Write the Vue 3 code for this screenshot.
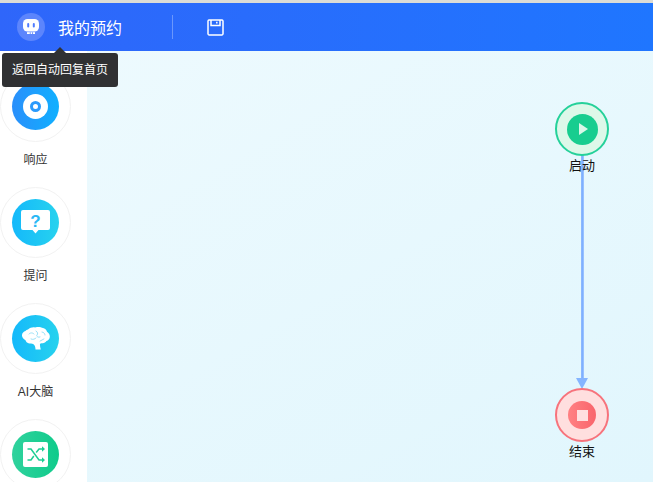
<script setup>
const items = [
  { label: '响应', cls: 'blue', icon: 'disc' },
  { label: '提问', cls: 'cyan', icon: 'ask' },
  { label: 'AI大脑', cls: 'cyan', icon: 'brain' },
  { label: '', cls: 'green', icon: 'shuffle' },
]
</script>

<template>
  <div class="page">
    <header class="header">
      <div class="logo">
        <svg width="16" height="16" viewBox="0 0 16 16">
          <rect x="0" y="0" width="16" height="12.500" rx="4.500" fill="#fff" />
          <rect x="4" y="13.200" width="8" height="1.800" fill="#fff" />
          <rect x="6.800" y="13.200" width=".8" height="1.800" fill="#5c85fc" />
          <rect x="9" y="13.200" width=".8" height="1.800" fill="#5c85fc" />
          <rect x="4.200" y="4" width="2" height="4.500" rx="1" fill="#4f7bff" />
          <rect x="9.800" y="4" width="2" height="4.500" rx="1" fill="#4f7bff" />
        </svg>
      </div>
      <span class="title">我的预约</span>
      <span class="divider"></span>
      <svg class="save" width="17" height="17" viewBox="0 0 17 17" fill="none" stroke="#fff" stroke-width="1.500">
        <path d="M2 1h13a1.200 1.200 0 0 1 1 1v13a1.200 1.200 0 0 1-1 1H2a1.200 1.200 0 0 1-1-1V2a1.200 1.200 0 0 1 1-1z" />
        <path d="M4 1v5.500h9V1" />
        <path d="M9.800 2.800v1.800" />
      </svg>
    </header>

    <div class="body">
      <aside class="sidebar">
        <div v-for="item in items" :key="item.icon" class="item">
          <div class="ring">
            <div class="disc" :class="item.cls">
              <template v-if="item.icon === 'disc'">
                <span class="donut"><span class="hole"></span></span>
              </template>
              <svg v-else-if="item.icon === 'ask'" width="29" height="26" viewBox="0 0 29 26">
                <path d="M2 0h25a2 2 0 0 1 2 2v16a2 2 0 0 1-2 2H17.500l-3 3.500-3-3.500H2a2 2 0 0 1-2-2V2a2 2 0 0 1 2-2z" fill="#fff" />
                <text x="14.500" y="16.500" text-anchor="middle" class="q">?</text>
              </svg>
              <svg v-else-if="item.icon === 'brain'" width="28" height="24" viewBox="0 0 28 24">
                <path d="M6 2.500C8 .5 11 0 13 .5c2-.8 5-.8 7 .3 2.500.3 4.500 2 5 4 1.800 1.200 3 3 2.800 5.200-.2 2-1.500 3.500-3.300 4-1 1.500-3 2.300-5 2.300-.7 0-1.300.2-1.500.7-.2 1.500.2 3.500.8 5.500h-5.300c0-2-.5-4.200-2-5.200-1.500-.8-3.500-.3-5-1-1.500-.5-2.500-1.500-3-3C1.500 12 .2 10.500 0 8.800-.2 6.300 1.500 4.500 3.500 4c.5-.7 1.500-1.300 2.500-1.500z" fill="#fff" />
                <path d="M7 7c2-2 4-1 5 0M14 4c2 1 2 3 1 4s1 3 3 2M20 5c2 0 3 2 3 3M9 12c2 1 4 0 5-1M18 14c1-1 3-1 4-2" fill="none" stroke="#8edcf6" stroke-width=".9" stroke-linecap="round" />
              </svg>
              <svg v-else width="25" height="25" viewBox="0 0 25 25">
                <rect width="25" height="25" rx="2" fill="#fff" />
                <path d="M4.500 7H8l8 11h3.500M4.500 18H8l2.800-4M13.200 10.500 16 7h3.500" fill="none" stroke="#1ccf94" stroke-width="1.500" />
                <path d="M19 4.200l3 2.800-3 2.800zM19 15.200l3 2.800-3 2.800z" fill="#1ccf94" />
              </svg>
            </div>
          </div>
          <div class="label">{{ item.label }}</div>
        </div>
      </aside>

      <main class="canvas">
        <div class="edge"></div>
        <div class="arrow"></div>
        <div class="node start-node">
          <div class="node-ring">
            <div class="node-inner"><span class="play"></span></div>
          </div>
          <div class="node-label">启动</div>
        </div>
        <div class="node end-node">
          <div class="node-ring">
            <div class="node-inner"><span class="stop"></span></div>
          </div>
          <div class="node-label">结束</div>
        </div>
      </main>
    </div>

    <div class="tooltip">返回自动回复首页</div>
  </div>
</template>

<style>
html, body { margin: 0; padding: 0; overflow: hidden; }
</style>

<style scoped>
.page {
  position: relative;
  width: 653px;
  height: 482px;
  overflow: hidden;
  background: #fff;
  font-family: "Liberation Sans", "Noto Sans CJK SC", sans-serif;
  border-top: 3px solid #dcdcd6;
  box-sizing: border-box;
}
.header {
  height: 48px;
  display: flex;
  align-items: center;
  padding-left: 17px;
  background: linear-gradient(90deg, #2f66fa, #1f76ff);
  color: #fff;
}
.logo {
  width: 28px;
  height: 28px;
  border-radius: 50%;
  background: #5c85fc;
  display: flex;
  align-items: center;
  justify-content: center;
}
.title {
  margin-left: 13px;
  font-size: 16px;
  width: 114px;
}
.divider {
  width: 1px;
  height: 24px;
  background: rgba(255, 255, 255, .3);
}
.save { margin-left: 34px; }
.body {
  display: flex;
  height: 431px;
}
.sidebar {
  width: 87px;
  flex: none;
  padding-top: 20px;
  overflow: hidden;
  background: #fff;
}
.item {
  height: 116px;
  width: 71px;
}
.ring {
  width: 71px;
  height: 71px;
  box-sizing: border-box;
  border: 1px solid #f2f2f2;
  border-radius: 50%;
  display: flex;
  align-items: center;
  justify-content: center;
}
.disc {
  width: 47px;
  height: 47px;
  border-radius: 50%;
  display: flex;
  align-items: center;
  justify-content: center;
}
.blue { background: linear-gradient(90deg, #2a8ffb, #10b0ff); }
.cyan { background: linear-gradient(90deg, #14b9fb, #27d2ee); }
.green { background: linear-gradient(90deg, #30d29d, #0fcb8b); }
.donut {
  width: 25px;
  height: 25px;
  border-radius: 50%;
  background: #fff;
  display: flex;
  align-items: center;
  justify-content: center;
}
.hole {
  width: 5px;
  height: 5px;
  border-radius: 50%;
  border: 3px solid #2a9afc;
  background: #fff;
}
.q {
  font: bold 17px "Liberation Sans", sans-serif;
  fill: #2ab8f5;
}
.label {
  margin-top: 10px;
  height: 16px;
  line-height: 16px;
  font-size: 12px;
  text-align: center;
  color: #333;
}
.canvas {
  position: relative;
  flex: 1;
  background: linear-gradient(150deg, #edfafe, #e1f6fd);
}
.edge {
  position: absolute;
  left: 494px;
  top: 104px;
  width: 3px;
  height: 226px;
  background: linear-gradient(90deg, #8fbcff, #7fb0ff 50%, #a5caff);
}
.arrow {
  position: absolute;
  left: 489px;
  top: 327px;
  width: 0;
  height: 0;
  border-left: 6px solid transparent;
  border-right: 6px solid transparent;
  border-top: 11px solid #85b5ff;
}
.node {
  position: absolute;
  left: 468px;
  width: 54px;
}
.start-node { top: 51px; }
.end-node { top: 337px; }
.node-ring {
  width: 54px;
  height: 54px;
  box-sizing: border-box;
  border-radius: 50%;
  display: flex;
  align-items: center;
  justify-content: center;
}
.start-node .node-ring { border: 2px solid #25d19a; background: #ddf8e9; }
.end-node .node-ring { border: 2px solid #f7737c; background: #ffdfdf; }
.node-inner {
  border-radius: 50%;
  display: flex;
  align-items: center;
  justify-content: center;
}
.start-node .node-inner { width: 31px; height: 31px; background: #18cd8f; }
.end-node .node-inner { width: 28px; height: 28px; background: linear-gradient(90deg, #ff8183, #f9656c); }
.play {
  margin-left: 3px;
  border-left: 9px solid #d9f7e8;
  border-top: 6px solid transparent;
  border-bottom: 6px solid transparent;
}
.stop {
  width: 11px;
  height: 11px;
  background: #ffdfdf;
}
.node-label {
  margin-top: 1px;
  height: 18px;
  line-height: 18px;
  font-size: 13px;
  text-align: center;
  color: #111;
}
.tooltip {
  position: absolute;
  left: 2px;
  top: 50px;
  width: 116px;
  height: 34px;
  box-sizing: border-box;
  padding-left: 10px;
  line-height: 34px;
  font-size: 12px;
  color: #fff;
  background: #303133;
  border-radius: 3px;
}
.tooltip::before {
  content: "";
  position: absolute;
  left: 52px;
  top: -6px;
  border-left: 6px solid transparent;
  border-right: 6px solid transparent;
  border-bottom: 6px solid #303133;
}
</style>
